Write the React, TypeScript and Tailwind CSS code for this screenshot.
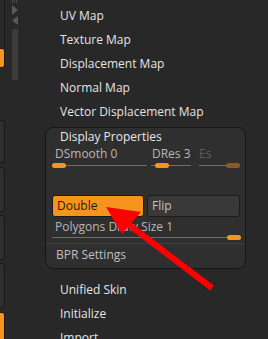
import React from 'react';

const font = { fontFamily: '"Open Sans", "Noto Sans", sans-serif' };

const MenuItem: React.FC<{ label: string }> = ({ label }) => (
  <div className="h-6 shrink-0 flex items-center pl-[15px] text-[12px] text-[#e4e4e4] whitespace-nowrap">{label}</div>
);

interface SliderProps {
  label: string;
  handle: 'left' | 'right';
  dim?: boolean;
  className?: string;
  labelClass?: string;
  trackClass?: string;
}

const Slider: React.FC<SliderProps> = ({ label, handle, dim, className, labelClass, trackClass }) => (
  <div className={`flex flex-col shrink-0 ${className ?? ''}`}>
    <div className={`flex items-center text-[12px] leading-none whitespace-nowrap ${labelClass ?? 'h-[18px] pl-[3px]'} ${dim ? 'text-[#5e5e5e]' : 'text-[#b8b8b8]'}`}>{label}</div>
    <div className={`relative h-[5px] flex items-center ${handle === 'left' ? 'justify-start' : 'justify-end'} ${trackClass ?? ''}`}>
      <div className="absolute inset-x-0 top-[2px] h-px bg-[#6e6e6e]" />
      <div className={`relative w-[14px] h-[5px] rounded-full ${dim ? 'bg-[#8a5a26]' : 'bg-[#f7941d]'}`} />
    </div>
  </div>
);

const LeftStrip: React.FC = () => (
  <div className="w-[5px] flex flex-col shrink-0 [&>div]:shrink-0">
    <div className="h-[48px] border-r border-[#1a1a1a]" />
    <div className="h-[20px] bg-[#f7941d] rounded-r-[3px] border border-l-0 border-[#1a1a1a]" />
    <div className="h-[52px]" />
    <div className="h-[43px] bg-[#2e2e2e] rounded-r-[3px] border border-l-0 border-[#1a1a1a]" />
    <div className="h-[4px]" />
    <div className="h-[45px] bg-[#2e2e2e] rounded-r-[3px] border border-l-0 border-[#1a1a1a]" />
    <div className="h-[3px]" />
    <div className="h-[45px] bg-[#2e2e2e] rounded-r-[3px] border border-l-0 border-[#1a1a1a]" />
    <div className="h-[3px]" />
    <div className="h-[45px] bg-[#2e2e2e] rounded-r-[3px] border border-l-0 border-[#1a1a1a]" />
    <div className="h-[4px]" />
    <div className="h-[30px] bg-[#f7941d] rounded-r-[3px] border border-l-0 border-[#1a1a1a]" />
  </div>
);

const ScrollStrip: React.FC = () => (
  <div className="w-[6px] ml-[7px] flex flex-col shrink-0 [&>*]:shrink-0">
    <div className="h-[3px] bg-[repeating-linear-gradient(90deg,#4a4a4a_0_1px,transparent_1px_2px)]" />
    <div className="h-[2px]" />
    <svg width="6" height="10" viewBox="0 0 6 10"><polygon points="0,0 6,5 0,10" fill="#5a5a5a" /></svg>
    <div className="h-[1px]" />
    <svg width="6" height="9" viewBox="0 0 6 9"><polygon points="6,0 0,4.5 6,9" fill="#5a5a5a" /></svg>
    <div className="h-[4px]" />
    <div className="h-[51px] bg-[repeating-conic-gradient(#4a4a4a_0_25%,#2e2e2e_0_50%)] bg-[length:2px_2px]" />
  </div>
);

export default function App() {
  return (
    <div className="relative w-[268px] h-[339px] overflow-hidden bg-[#282828] flex" style={font}>
      <LeftStrip />
      <ScrollStrip />
      <div className="ml-[27px] flex flex-col pt-[4px]">
        <MenuItem label="UV Map" />
        <MenuItem label="Texture Map" />
        <MenuItem label="Displacement Map" />
        <MenuItem label="Normal Map" />
        <MenuItem label="Vector Displacement Map" />

        <div className="mt-[3px] shrink-0 w-[201px] h-[142px] rounded-[8px] border border-[#161616] bg-[#2f2f2f] flex flex-col">
          <div className="h-[17px] shrink-0 flex items-center pl-[14px] text-[12px] leading-none text-[#e8e8e8]">Display Properties</div>
          <div className="flex pl-[6px] shrink-0">
            <Slider label="DSmooth 0" handle="left" className="w-[95px]" />
            <Slider label="DRes 3" handle="left" className="w-[40px] ml-[4px]" labelClass="h-[18px] pl-px" trackClass="pl-[4px]" />
            <Slider label="Es" handle="right" dim className="w-[41px] ml-[8px]" labelClass="h-[18px]" />
          </div>
          <div className="flex pl-[6px] mt-[27px] gap-[3px] shrink-0">
            <div className="w-[92px] h-[22px] rounded-[3px] border border-[#1a1a1a] bg-[#f7941d] flex items-center pl-[4px] text-[12px] text-[#1c1c1c]">Double</div>
            <div className="w-[93px] h-[22px] rounded-[3px] border border-[#1c1c1c] bg-[#393939] flex items-center pl-[4px] text-[12px] text-[#c4c4c4]">Flip</div>
          </div>
          <div className="pl-[6px] w-[195px] mt-[2px] shrink-0">
            <Slider label="Polygons Draw Size 1" handle="right" labelClass="h-[16px] pl-[3px]" />
          </div>
          <div className="mt-[3px] h-px shrink-0 bg-[#414141] mx-px" />
          <div className="h-[22px] shrink-0 flex items-center pl-[10px] text-[12px] text-[#c0c0c0]">BPR Settings</div>
        </div>

        <div className="mt-[9px] shrink-0">
          <MenuItem label="Unified Skin" />
          <MenuItem label="Initialize" />
          <MenuItem label="Import" />
        </div>
      </div>

      <svg className="absolute inset-0 pointer-events-none" width="268" height="339" viewBox="0 0 268 339">
        <line x1="212" y1="288" x2="124" y2="221" stroke="#ff0000" strokeWidth="6" />
        <polygon points="106,207 141,212 122,234" fill="#ff0000" />
      </svg>
    </div>
  );
}
